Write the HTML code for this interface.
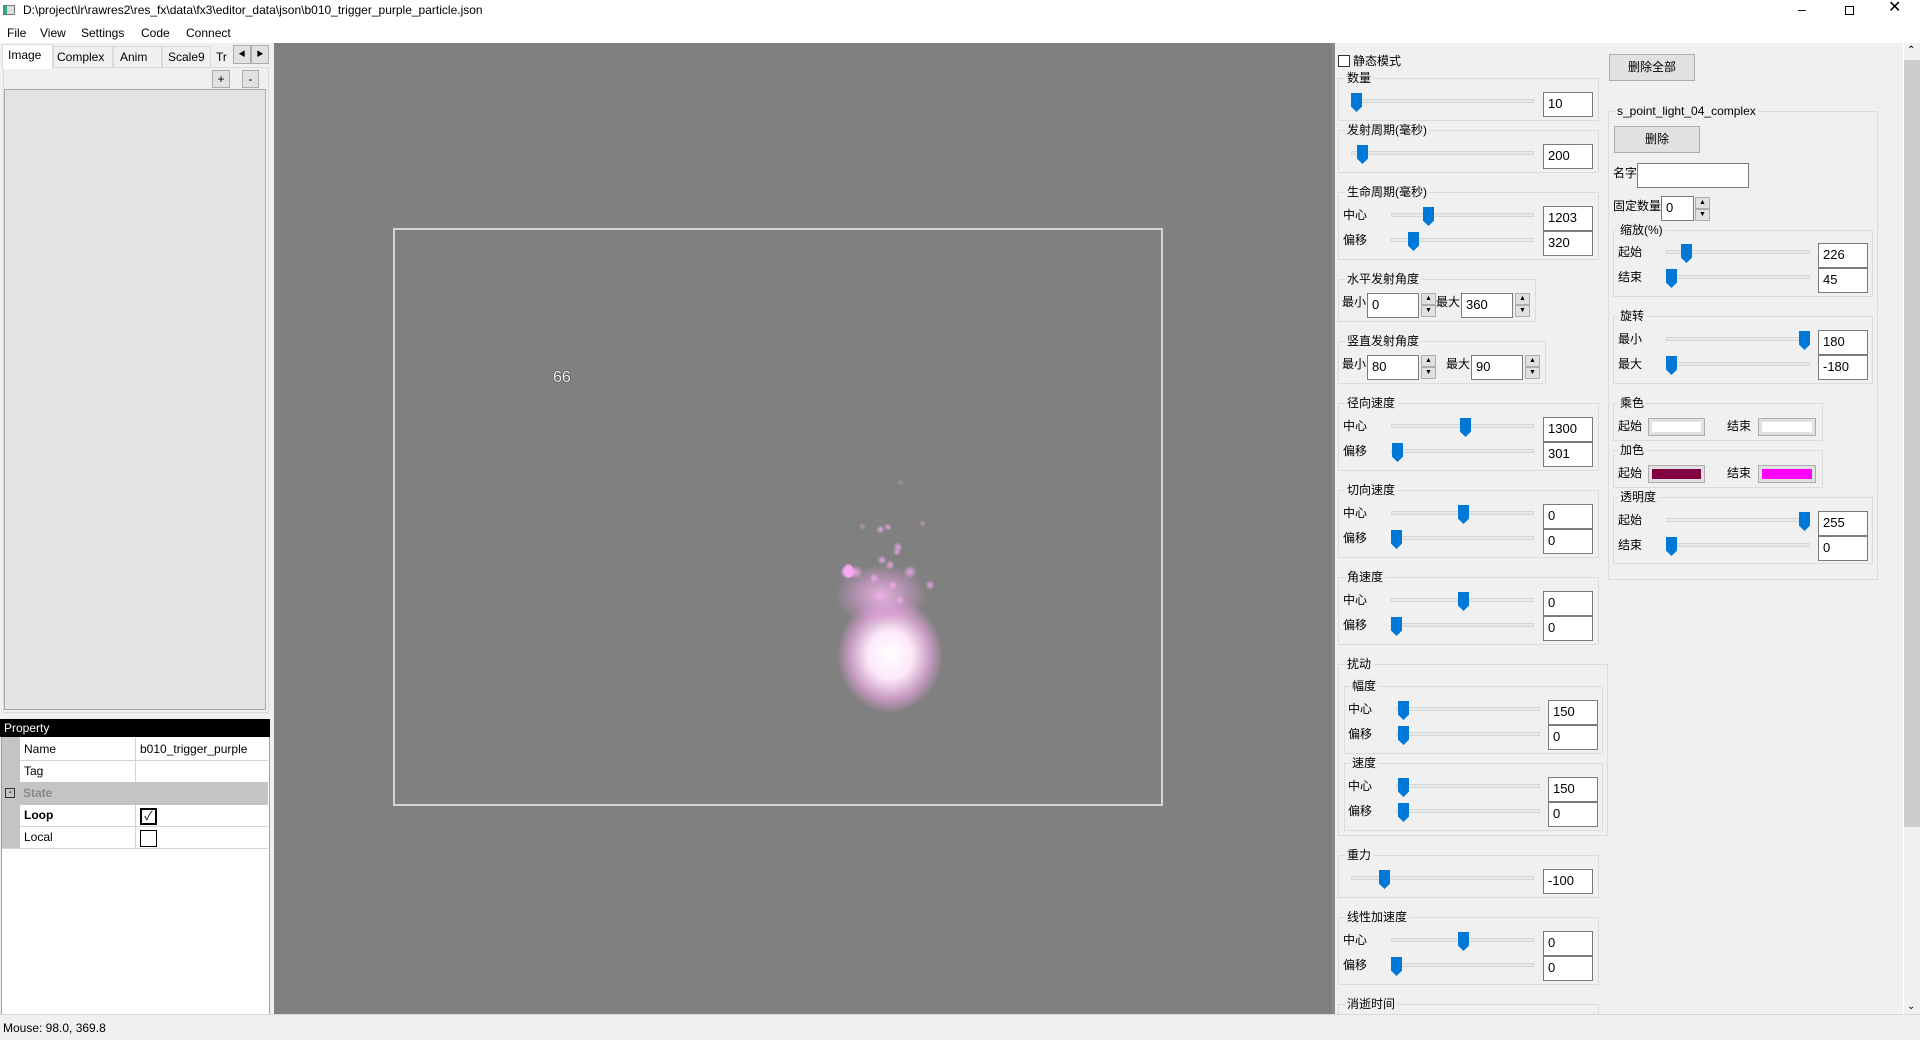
<!DOCTYPE html>
<html><head><meta charset="utf-8"><style>
*{margin:0;padding:0;box-sizing:border-box}
body{width:1920px;height:1040px;position:relative;overflow:hidden;background:#f0f0f0;font-family:"Liberation Sans","Noto Sans CJK SC",sans-serif;font-size:12px;color:#000}
.a{position:absolute}
.g{position:absolute;border:1px solid #dcdcdc}
.gt{position:absolute;background:#f0f0f0;padding:0 2px;font-size:12px;line-height:14px;white-space:nowrap}
.in{position:absolute;background:#fff;border:1px solid #7a7a7a;font-size:13px;line-height:22px;padding-left:4px;height:25px;width:50px}
.tr{position:absolute;height:4px;background:#e7eaea;border:1px solid #d6d6d6}
.th{position:absolute;width:11px;height:19px;background:#0078d7;clip-path:polygon(0 0,100% 0,100% 72%,50% 100%,0 72%)}
.lb{position:absolute;font-size:12px;line-height:14px;white-space:nowrap}
.sp{position:absolute;width:15px;height:12px;background:#e1e1e1;border:1px solid #adadad;font-size:7px;line-height:10px;text-align:center;color:#000}
.btn{position:absolute;background:#e1e1e1;border:1px solid #adadad;text-align:center;font-size:12px}
.sw{position:absolute;border:1px solid #adadad;background:#e1e1e1;padding:3px}
.sw div{width:100%;height:100%}
.dot{position:absolute;border-radius:50%}
.p{position:absolute;width:10px;height:10px;border-radius:50%;background:radial-gradient(rgba(250,170,245,.85),rgba(240,150,240,0) 70%)}
</style></head><body>
<!-- title bar -->
<div class="a" style="left:0;top:0;width:1920px;height:43px;background:#fff"></div>
<div class="a" style="left:3px;top:5px;width:12px;height:10px;border:1px solid #777;background:linear-gradient(90deg,#3a7 0 30%,#ddd 30%)"></div>
<div class="lb" style="left:23px;top:3px;font-size:12px">D:\project\lr\rawres2\res_fx\data\fx3\editor_data\json\b010_trigger_purple_particle.json</div>
<div class="lb" style="left:1798px;top:2px;font-size:14px">&#8211;</div>
<div class="a" style="left:1845px;top:6px;width:9px;height:9px;border:1px solid #000"></div>
<div class="lb" style="left:1888px;top:1px;font-size:16px">&#x2715;</div>
<div class="lb" style="left:7px;top:26px">File</div>
<div class="lb" style="left:40px;top:26px">View</div>
<div class="lb" style="left:81px;top:26px">Settings</div>
<div class="lb" style="left:141px;top:26px">Code</div>
<div class="lb" style="left:186px;top:26px">Connect</div>
<!-- left panel tabs -->
<div class="a" style="left:3px;top:67px;width:266px;height:646px;border:1px solid #dadada;background:#f0f0f0"></div>
<div class="a" style="left:2px;top:44px;width:51px;height:25px;background:#fff;border:1px solid #dadada;border-bottom:none"></div>
<div class="lb" style="left:8px;top:48px">Image</div>
<div class="a" style="left:53px;top:46px;width:60px;height:22px;border:1px solid #dadada;background:#f0f0f0"></div><div class="lb" style="left:57px;top:50px">Complex</div>
<div class="a" style="left:113px;top:46px;width:49px;height:22px;border:1px solid #dadada;background:#f0f0f0"></div><div class="lb" style="left:120px;top:50px">Anim</div>
<div class="a" style="left:162px;top:46px;width:49px;height:22px;border:1px solid #dadada;background:#f0f0f0"></div><div class="lb" style="left:168px;top:50px">Scale9</div>
<div class="lb" style="left:216px;top:50px">Tr</div>
<div class="btn" style="left:233px;top:45px;width:18px;height:19px;font-size:7px;line-height:17px">&#9664;</div>
<div class="btn" style="left:251px;top:45px;width:18px;height:19px;font-size:7px;line-height:17px">&#9654;</div>
<div class="btn" style="left:212px;top:70px;width:18px;height:18px;line-height:16px">+</div>
<div class="btn" style="left:242px;top:70px;width:17px;height:18px;line-height:16px">-</div>
<div class="a" style="left:4px;top:89px;width:262px;height:621px;background:#e3e3e3;border:1px solid #a8a8a8"></div>
<!-- property -->
<div class="a" style="left:0;top:719px;width:270px;height:18px;background:#000"></div>
<div class="lb" style="left:4px;top:721px;color:#fff">Property</div>
<div class="a" style="left:1px;top:737px;width:269px;height:278px;background:#fff;border:1px solid #a0a0a0;border-top:none"></div>
<div class="a" style="left:2px;top:737px;width:18px;height:112px;background:#c4c4c4"></div>
<div class="a" style="left:2px;top:782px;width:266px;height:23px;background:#c4c4c4"></div>
<div class="a" style="left:20px;top:760px;width:248px;height:1px;background:#d4d4d4"></div>
<div class="a" style="left:20px;top:826px;width:248px;height:1px;background:#d4d4d4"></div>
<div class="a" style="left:2px;top:848px;width:266px;height:1px;background:#d4d4d4"></div>
<div class="a" style="left:135px;top:737px;width:1px;height:45px;background:#d4d4d4"></div>
<div class="a" style="left:135px;top:805px;width:1px;height:44px;background:#d4d4d4"></div>
<div class="lb" style="left:24px;top:742px">Name</div><div class="lb" style="left:140px;top:742px">b010_trigger_purple</div>
<div class="lb" style="left:24px;top:764px">Tag</div>
<div class="a" style="left:5px;top:788px;width:10px;height:10px;border:1px solid #333;font-size:10px;line-height:7px;text-align:center">-</div>
<div class="lb" style="left:23px;top:786px;color:#888;font-weight:bold">State</div>
<div class="lb" style="left:24px;top:808px;font-weight:bold">Loop</div>
<div class="a" style="left:140px;top:808px;width:17px;height:17px;border:2px solid #000;font-size:12px;line-height:13px;text-align:center">&#10003;</div>
<div class="lb" style="left:24px;top:830px">Local</div>
<div class="a" style="left:140px;top:830px;width:17px;height:17px;border:1px solid #000"></div>
<!-- canvas -->
<div class="a" style="left:274px;top:43px;width:1058px;height:972px;background:#808080"></div>
<div class="a" style="left:393px;top:228px;width:770px;height:578px;border:2px solid #d4d4d4"></div>
<div class="lb" style="left:553px;top:371px;font-size:16px;color:#f0f0f0;text-shadow:0 0 1px #222,0 0 1px #222">66</div>
<div class="dot" style="left:838px;top:598px;width:104px;height:114px;background:radial-gradient(ellipse at 50% 50%,#fff 0,rgba(255,235,252,.98) 30%,rgba(245,170,235,.6) 55%,rgba(200,130,190,0) 72%)"></div>
<div class="dot" style="left:836px;top:565px;width:90px;height:60px;background:radial-gradient(ellipse,rgba(250,190,245,.8) 0,rgba(235,160,230,.4) 45%,rgba(200,130,190,0) 72%)"></div>
<div class="p" style="left:849px;top:565px;width:14px;height:14px"></div>
<div class="p" style="left:869px;top:573px"></div>
<div class="p" style="left:888px;top:580px"></div>
<div class="p" style="left:903px;top:565px;width:14px;height:14px"></div>
<div class="p" style="left:874px;top:592px"></div>
<div class="p" style="left:895px;top:595px"></div>
<div class="p" style="left:843px;top:565px;width:14px;height:14px"></div>
<div class="p" style="left:925px;top:580px"></div>
<div class="p" style="left:843px;top:568px"></div>
<div class="p" style="left:843px;top:568px"></div>
<div class="p" style="left:844px;top:569px"></div>
<div class="p" style="left:843px;top:563px"></div>
<div class="p" style="left:843px;top:564px"></div>
<div class="p" style="left:843px;top:566px"></div>
<div class="p" style="left:840px;top:565px;width:14px;height:14px"></div>
<div class="p" style="left:845px;top:567px"></div>
<div class="p" style="left:843px;top:569px"></div>
<div class="p" style="left:845px;top:565px"></div>
<div class="p" style="left:844px;top:563px"></div>
<div class="p" style="left:843px;top:565px"></div>
<div class="p" style="left:841px;top:566px"></div>
<div class="p" style="left:845px;top:568px"></div>
<div class="p" style="left:842px;top:567px"></div>
<div class="p" style="left:844px;top:566px"></div>
<div class="p" style="left:842px;top:566px"></div>
<div class="p" style="left:844px;top:565px"></div>
<div class="p" style="left:885px;top:560px"></div>
<div class="p" style="left:877px;top:555px"></div>
<div class="p" style="left:893px;top:542px"></div>
<div class="p" style="left:884px;top:523px;width:8px;height:8px"></div>
<div class="p" style="left:876px;top:525px;width:9px;height:9px"></div>
<div class="p" style="left:893px;top:548px;width:8px;height:8px"></div>
<div class="p" style="left:859px;top:523px;width:7px;height:7px;opacity:.6"></div>
<div class="p" style="left:919px;top:520px;width:7px;height:7px;opacity:.6"></div>
<div class="p" style="left:897px;top:479px;width:7px;height:7px;opacity:.4"></div>
<!-- right panel -->
<div class="a" style="left:1332px;top:43px;width:3px;height:972px;background:#8a8a8a"></div>
<div class="a" style="left:1903px;top:43px;width:17px;height:972px;background:#f0f0f0;border-left:1px solid #fff"></div>
<div class="a" style="left:1904px;top:60px;width:16px;height:767px;background:#cdcdcd"></div>
<div class="lb" style="left:1907px;top:44px;font-size:10px">&#8963;</div>
<div class="lb" style="left:1907px;top:1000px;font-size:10px">&#8964;</div>
<div class="a" style="left:1338px;top:55px;width:12px;height:12px;border:1px solid #333;background:#fff"></div>
<div class="lb" style="left:1353px;top:54px">静态模式</div>

<!-- left groups -->
<div class="g" style="left:1338px;top:78px;width:261px;height:43px"></div><div class="gt" style="left:1345px;top:71px">数量</div>
<div class="g" style="left:1338px;top:130px;width:261px;height:43px"></div><div class="gt" style="left:1345px;top:123px">发射周期(毫秒)</div>
<div class="g" style="left:1338px;top:192px;width:261px;height:68px"></div><div class="gt" style="left:1345px;top:185px">生命周期(毫秒)</div>
<div class="g" style="left:1338px;top:279px;width:198px;height:43px"></div><div class="gt" style="left:1345px;top:272px">水平发射角度</div>
<div class="g" style="left:1338px;top:341px;width:208px;height:43px"></div><div class="gt" style="left:1345px;top:334px">竖直发射角度</div>
<div class="g" style="left:1338px;top:403px;width:261px;height:68px"></div><div class="gt" style="left:1345px;top:396px">径向速度</div>
<div class="g" style="left:1338px;top:490px;width:261px;height:68px"></div><div class="gt" style="left:1345px;top:483px">切向速度</div>
<div class="g" style="left:1338px;top:577px;width:261px;height:68px"></div><div class="gt" style="left:1345px;top:570px">角速度</div>
<div class="g" style="left:1338px;top:664px;width:270px;height:172px"></div><div class="gt" style="left:1345px;top:657px">扰动</div>
<div class="g" style="left:1344px;top:686px;width:259px;height:68px"></div><div class="gt" style="left:1350px;top:679px">幅度</div>
<div class="g" style="left:1344px;top:763px;width:259px;height:68px"></div><div class="gt" style="left:1350px;top:756px">速度</div>
<div class="g" style="left:1338px;top:855px;width:261px;height:43px"></div><div class="gt" style="left:1345px;top:848px">重力</div>
<div class="g" style="left:1338px;top:917px;width:261px;height:68px"></div><div class="gt" style="left:1345px;top:910px">线性加速度</div>
<div class="g" style="left:1338px;top:1004px;width:261px;height:12px"></div><div class="gt" style="left:1345px;top:997px">消逝时间</div>

<!-- left sliders -->
<div class="tr" style="left:1351px;top:99px;width:183px"></div><div class="th" style="left:1351px;top:93px"></div><div class="in" style="left:1543px;top:92px">10</div>
<div class="tr" style="left:1351px;top:151px;width:183px"></div><div class="th" style="left:1357px;top:145px"></div><div class="in" style="left:1543px;top:144px">200</div>
<div class="lb" style="left:1343px;top:208px">中心</div><div class="tr" style="left:1391px;top:213px;width:143px"></div><div class="th" style="left:1423px;top:207px"></div><div class="in" style="left:1543px;top:206px">1203</div>
<div class="lb" style="left:1343px;top:233px">偏移</div><div class="tr" style="left:1391px;top:238px;width:143px"></div><div class="th" style="left:1408px;top:232px"></div><div class="in" style="left:1543px;top:231px">320</div>

<div class="lb" style="left:1342px;top:295px">最小</div><div class="in" style="left:1367px;top:293px;width:52px">0</div>
<div class="sp" style="left:1421px;top:293px">&#9650;</div><div class="sp" style="left:1421px;top:305px">&#9660;</div>
<div class="lb" style="left:1436px;top:295px">最大</div><div class="in" style="left:1461px;top:293px;width:52px">360</div>
<div class="sp" style="left:1515px;top:293px">&#9650;</div><div class="sp" style="left:1515px;top:305px">&#9660;</div>
<div class="lb" style="left:1342px;top:357px">最小</div><div class="in" style="left:1367px;top:355px;width:52px">80</div>
<div class="sp" style="left:1421px;top:355px">&#9650;</div><div class="sp" style="left:1421px;top:367px">&#9660;</div>
<div class="lb" style="left:1446px;top:357px">最大</div><div class="in" style="left:1471px;top:355px;width:52px">90</div>
<div class="sp" style="left:1525px;top:355px">&#9650;</div><div class="sp" style="left:1525px;top:367px">&#9660;</div>

<div class="lb" style="left:1343px;top:419px">中心</div><div class="tr" style="left:1391px;top:424px;width:143px"></div><div class="th" style="left:1460px;top:418px"></div><div class="in" style="left:1543px;top:417px">1300</div>
<div class="lb" style="left:1343px;top:444px">偏移</div><div class="tr" style="left:1391px;top:449px;width:143px"></div><div class="th" style="left:1392px;top:443px"></div><div class="in" style="left:1543px;top:442px">301</div>
<div class="lb" style="left:1343px;top:506px">中心</div><div class="tr" style="left:1391px;top:511px;width:143px"></div><div class="th" style="left:1458px;top:505px"></div><div class="in" style="left:1543px;top:504px">0</div>
<div class="lb" style="left:1343px;top:531px">偏移</div><div class="tr" style="left:1391px;top:536px;width:143px"></div><div class="th" style="left:1391px;top:530px"></div><div class="in" style="left:1543px;top:529px">0</div>
<div class="lb" style="left:1343px;top:593px">中心</div><div class="tr" style="left:1391px;top:598px;width:143px"></div><div class="th" style="left:1458px;top:592px"></div><div class="in" style="left:1543px;top:591px">0</div>
<div class="lb" style="left:1343px;top:618px">偏移</div><div class="tr" style="left:1391px;top:623px;width:143px"></div><div class="th" style="left:1391px;top:617px"></div><div class="in" style="left:1543px;top:616px">0</div>

<div class="lb" style="left:1348px;top:702px">中心</div><div class="tr" style="left:1396px;top:707px;width:144px"></div><div class="th" style="left:1398px;top:701px"></div><div class="in" style="left:1548px;top:700px">150</div>
<div class="lb" style="left:1348px;top:727px">偏移</div><div class="tr" style="left:1396px;top:732px;width:144px"></div><div class="th" style="left:1398px;top:726px"></div><div class="in" style="left:1548px;top:725px">0</div>
<div class="lb" style="left:1348px;top:779px">中心</div><div class="tr" style="left:1396px;top:784px;width:144px"></div><div class="th" style="left:1398px;top:778px"></div><div class="in" style="left:1548px;top:777px">150</div>
<div class="lb" style="left:1348px;top:804px">偏移</div><div class="tr" style="left:1396px;top:809px;width:144px"></div><div class="th" style="left:1398px;top:803px"></div><div class="in" style="left:1548px;top:802px">0</div>

<div class="tr" style="left:1351px;top:876px;width:183px"></div><div class="th" style="left:1379px;top:870px"></div><div class="in" style="left:1543px;top:869px">-100</div>
<div class="lb" style="left:1343px;top:933px">中心</div><div class="tr" style="left:1391px;top:938px;width:143px"></div><div class="th" style="left:1458px;top:932px"></div><div class="in" style="left:1543px;top:931px">0</div>
<div class="lb" style="left:1343px;top:958px">偏移</div><div class="tr" style="left:1391px;top:963px;width:143px"></div><div class="th" style="left:1391px;top:957px"></div><div class="in" style="left:1543px;top:956px">0</div>

<!-- right column -->
<div class="btn" style="left:1609px;top:54px;width:86px;height:27px;line-height:25px">删除全部</div>
<div class="g" style="left:1608px;top:111px;width:270px;height:469px"></div><div class="gt" style="left:1615px;top:104px">s_point_light_04_complex</div>
<div class="btn" style="left:1614px;top:126px;width:86px;height:27px;line-height:25px">删除</div>
<div class="lb" style="left:1613px;top:166px">名字</div><div class="in" style="left:1637px;top:163px;width:112px"></div>
<div class="lb" style="left:1613px;top:199px">固定数量</div><div class="in" style="left:1661px;top:196px;width:33px">0</div>
<div class="sp" style="left:1695px;top:197px">&#9650;</div><div class="sp" style="left:1695px;top:209px">&#9660;</div>
<div class="g" style="left:1613px;top:230px;width:260px;height:67px"></div><div class="gt" style="left:1618px;top:223px">缩放(%)</div>
<div class="lb" style="left:1618px;top:245px">起始</div><div class="tr" style="left:1666px;top:250px;width:144px"></div><div class="th" style="left:1681px;top:244px"></div><div class="in" style="left:1818px;top:243px">226</div>
<div class="lb" style="left:1618px;top:270px">结束</div><div class="tr" style="left:1666px;top:275px;width:144px"></div><div class="th" style="left:1666px;top:269px"></div><div class="in" style="left:1818px;top:268px">45</div>
<div class="g" style="left:1613px;top:316px;width:260px;height:68px"></div><div class="gt" style="left:1618px;top:309px">旋转</div>
<div class="lb" style="left:1618px;top:332px">最小</div><div class="tr" style="left:1666px;top:337px;width:144px"></div><div class="th" style="left:1799px;top:331px"></div><div class="in" style="left:1818px;top:330px">180</div>
<div class="lb" style="left:1618px;top:357px">最大</div><div class="tr" style="left:1666px;top:362px;width:144px"></div><div class="th" style="left:1666px;top:356px"></div><div class="in" style="left:1818px;top:355px">-180</div>
<div class="g" style="left:1613px;top:403px;width:210px;height:38px"></div><div class="gt" style="left:1618px;top:396px">乘色</div>
<div class="lb" style="left:1618px;top:419px">起始</div><div class="sw" style="left:1648px;top:418px;width:57px;height:18px"><div style="background:#fff"></div></div>
<div class="lb" style="left:1727px;top:419px">结束</div><div class="sw" style="left:1758px;top:418px;width:58px;height:18px"><div style="background:#fff"></div></div>
<div class="g" style="left:1613px;top:450px;width:210px;height:38px"></div><div class="gt" style="left:1618px;top:443px">加色</div>
<div class="lb" style="left:1618px;top:466px">起始</div><div class="sw" style="left:1648px;top:465px;width:57px;height:18px"><div style="background:#800040"></div></div>
<div class="lb" style="left:1727px;top:466px">结束</div><div class="sw" style="left:1758px;top:465px;width:58px;height:18px"><div style="background:#ff00ff"></div></div>
<div class="g" style="left:1613px;top:497px;width:260px;height:67px"></div><div class="gt" style="left:1618px;top:490px">透明度</div>
<div class="lb" style="left:1618px;top:513px">起始</div><div class="tr" style="left:1666px;top:518px;width:144px"></div><div class="th" style="left:1799px;top:512px"></div><div class="in" style="left:1818px;top:511px">255</div>
<div class="lb" style="left:1618px;top:538px">结束</div><div class="tr" style="left:1666px;top:543px;width:144px"></div><div class="th" style="left:1666px;top:537px"></div><div class="in" style="left:1818px;top:536px">0</div>

<!-- status bar -->
<div class="a" style="left:0;top:1014px;width:1920px;height:26px;background:#f0f0f0;border-top:1px solid #d8d8d8"></div>
<div class="lb" style="left:3px;top:1021px">Mouse: 98.0, 369.8</div>
</body></html>
